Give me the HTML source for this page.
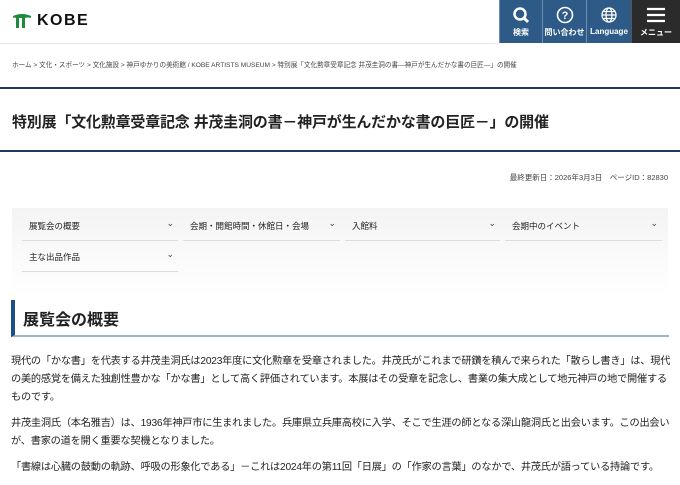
<!DOCTYPE html>
<html><head><meta charset="utf-8"><style>
*{margin:0;padding:0;box-sizing:border-box}
body{width:680px;height:480px;overflow:hidden;background:#fff;font-family:"Liberation Sans","Noto Sans CJK JP",sans-serif;color:#222;position:relative}
.a{position:absolute}
.btn{position:absolute;top:0;height:43px;background:#2d5a86;color:#fff;font-size:8px;font-weight:bold;text-align:center;border-left:1px solid #6a8fb3}
.btn svg{display:block;margin:6px auto 3px}
.nav{position:absolute;font-size:8.5px;height:30px;border-bottom:1px solid #ddd;line-height:30px;padding-left:7px}
.nav:after{content:"⌄";position:absolute;right:4px;top:-3px;font-size:9px;color:#444}
p{font-size:10.2px;line-height:18px;margin-bottom:8px;letter-spacing:-0.22px;white-space:nowrap}
</style></head><body>
<div class="a" style="left:12px;top:13px">
<svg width="20" height="16" viewBox="0 0 20 16"><path d="M1 3 Q10 -1 19 3 L19 5 Q15 4 13 5 L13 15 L10 15 L10 5 L7 5 L7 15 L4 15 L4 5 Q2 4 1 5Z" fill="#1f8a3c"/></svg></div>
<div class="a" style="left:37px;top:12px;font-size:16px;font-weight:bold;letter-spacing:1.5px;color:#111">KOBE</div>
<div class="btn" style="left:499px;width:43px"><svg width="18" height="18" viewBox="0 0 18 18"><circle cx="8" cy="8" r="5.5" fill="none" stroke="#fff" stroke-width="2.5"/><path d="M12 12l4 4" stroke="#fff" stroke-width="3"/></svg>検索</div>
<div class="btn" style="left:542px;width:44px"><svg width="18" height="18" viewBox="0 0 18 18"><circle cx="9" cy="9" r="7.5" fill="none" stroke="#fff" stroke-width="1.6"/><text x="9" y="13" font-size="11" font-weight="bold" fill="#fff" text-anchor="middle" font-family="Liberation Sans">?</text></svg>問い合わせ</div>
<div class="btn" style="left:586px;width:45px"><svg width="18" height="18" viewBox="0 0 18 18" fill="none" stroke="#fff" stroke-width="1.3"><circle cx="9" cy="9" r="7"/><ellipse cx="9" cy="9" rx="3" ry="7"/><path d="M2 9h14M3 5.5h12M3 12.5h12"/></svg>Language</div>
<div class="btn" style="left:631px;width:49px;background:#2b2b2b;border-left:1px solid #555"><svg width="20" height="18" viewBox="0 0 20 18"><path d="M1 3h18M1 9h18M1 15h18" stroke="#fff" stroke-width="2.2"/></svg>メニュー</div>
<div class="a" style="left:0;top:43px;width:499px;height:1px;background:#e6e6e6"></div>
<div class="a" style="left:12px;top:59px;font-size:6.6px;color:#444;white-space:nowrap">ホーム &gt; 文化・スポーツ &gt; 文化施設 &gt; 神戸ゆかりの美術館 / KOBE ARTISTS MUSEUM &gt; 特別展「文化勲章受章記念 井茂圭洞の書―神戸が生んだかな書の巨匠―」の開催</div>
<div class="a" style="left:0;top:87px;width:680px;height:2px;background:#1f3a5a"></div>
<div class="a" style="left:12px;top:111px;font-size:15px;font-weight:bold;color:#222;white-space:nowrap;letter-spacing:-0.2px">特別展「文化勲章受章記念 井茂圭洞の書－神戸が生んだかな書の巨匠－」の開催</div>
<div class="a" style="left:0;top:150px;width:680px;height:2px;background:#1f3a5a"></div>
<div class="a" style="right:12px;top:172px;font-size:7.5px;color:#444">最終更新日：2026年3月3日　ページID：82830</div>
<div class="a" style="left:12px;top:208px;width:656px;height:88px;background:linear-gradient(#f4f4f4,#fff)"></div>
<div class="nav" style="left:22px;top:211px;width:156px">展覧会の概要</div>
<div class="nav" style="left:183px;top:211px;width:157px">会期・開館時間・休館日・会場</div>
<div class="nav" style="left:345px;top:211px;width:155px">入館料</div>
<div class="nav" style="left:505px;top:211px;width:157px">会期中のイベント</div>
<div class="nav" style="left:22px;top:242px;width:156px">主な出品作品</div>
<div class="a" style="left:11px;top:300px;width:658px;height:37px;border-left:4px solid #1f4f82;border-bottom:2px solid #9fb4c8;font-size:16px;font-weight:bold;padding:6px 0 0 8px">展覧会の概要</div>
<div class="a" style="left:11px;top:353px;width:660px">
<p>現代の「かな書」を代表する井茂圭洞氏は2023年度に文化勲章を受章されました。井茂氏がこれまで研鑽を積んで来られた「散らし書き」は、現代<br>の美的感覚を備えた独創性豊かな「かな書」として高く評価されています。本展はその受章を記念し、書業の集大成として地元神戸の地で開催する<br>ものです。</p>
<p>井茂圭洞氏（本名雅吉）は、1936年神戸市に生まれました。兵庫県立兵庫高校に入学、そこで生涯の師となる深山龍洞氏と出会います。この出会い<br>が、書家の道を開く重要な契機となりました。</p>
<p>「書線は心臓の鼓動の軌跡、呼吸の形象化である」－これは2024年の第11回「日展」の「作家の言葉」のなかで、井茂氏が語っている持論です。</p>
</div>
</body></html>
